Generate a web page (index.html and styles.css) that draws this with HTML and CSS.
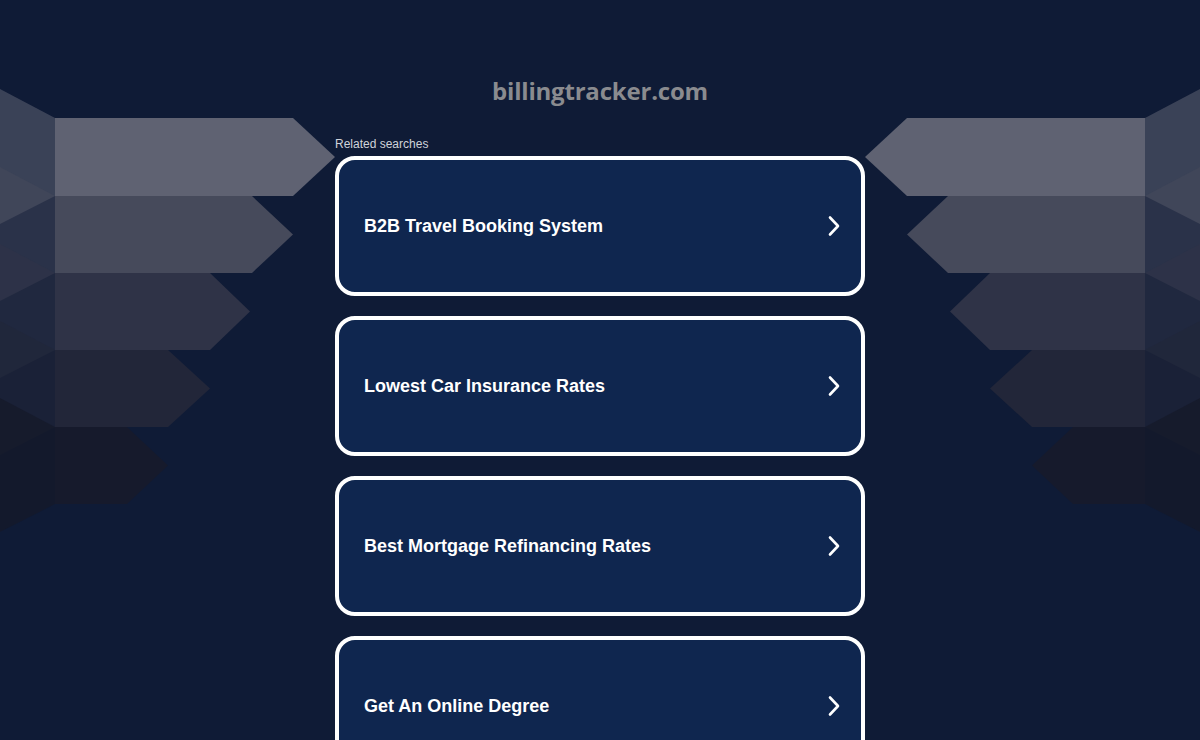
FILE: index.html
```html
<!DOCTYPE html>
<html lang="en">
<head>
<meta charset="utf-8">
<title>billingtracker.com</title>
<link rel="stylesheet" href="styles.css">
</head>
<body>
<svg class="deco deco-left" width="340" height="560" viewBox="0 0 340 560" aria-hidden="true">
  <g class="sides">
    <polygon points="0,89 55,118 55,196 0,224" fill="#5f6272" opacity="0.55"/>
    <polygon points="0,167 55,196 55,273 0,301" fill="#464a5b" opacity="0.5"/>
    <polygon points="0,244 55,273 55,350 0,378" fill="#2f3347" opacity="0.55"/>
    <polygon points="0,321 55,350 55,427 0,455" fill="#222639" opacity="0.6"/>
    <polygon points="0,398 55,427 55,504 0,532" fill="#151929" opacity="0.75"/>
  </g>
  <polygon points="55,118 293,118 335,157 293,196 55,196" fill="#5f6272"/>
  <polygon points="55,196 252,196 293,234.5 252,273 55,273" fill="#464a5b"/>
  <polygon points="55,273 210,273 250,311.5 210,350 55,350" fill="#2f3347"/>
  <polygon points="55,350 168,350 210,388.5 168,427 55,427" fill="#222639"/>
  <polygon points="55,427 127,427 168,465.5 127,504 55,504" fill="#161a2c"/>
</svg>
<svg class="deco deco-right" width="340" height="560" viewBox="0 0 340 560" aria-hidden="true">
  <g transform="translate(340,0) scale(-1,1)">
    <polygon points="0,89 55,118 55,196 0,224" fill="#5f6272" opacity="0.55"/>
    <polygon points="0,167 55,196 55,273 0,301" fill="#464a5b" opacity="0.5"/>
    <polygon points="0,244 55,273 55,350 0,378" fill="#2f3347" opacity="0.55"/>
    <polygon points="0,321 55,350 55,427 0,455" fill="#222639" opacity="0.6"/>
    <polygon points="0,398 55,427 55,504 0,532" fill="#151929" opacity="0.75"/>
    <polygon points="55,118 293,118 335,157 293,196 55,196" fill="#5f6272"/>
    <polygon points="55,196 252,196 293,234.5 252,273 55,273" fill="#464a5b"/>
    <polygon points="55,273 210,273 250,311.5 210,350 55,350" fill="#2f3347"/>
    <polygon points="55,350 168,350 210,388.5 168,427 55,427" fill="#222639"/>
    <polygon points="55,427 127,427 168,465.5 127,504 55,504" fill="#161a2c"/>
  </g>
</svg>

<main class="page">
  <h1 class="domain">billingtracker.com</h1>
  <section class="related">
    <div class="related-title">Related searches</div>
    <ul class="links">
      <li><a class="link-card" href="#"><span class="link-text">B2B Travel Booking System</span>
        <svg class="chev" width="14" height="22" viewBox="0 0 14 22"><path d="M3 2.5 L11 11 L3 19.5" fill="none" stroke="#fff" stroke-width="2.6" stroke-linecap="round" stroke-linejoin="round"/></svg></a></li>
      <li><a class="link-card" href="#"><span class="link-text">Lowest Car Insurance Rates</span>
        <svg class="chev" width="14" height="22" viewBox="0 0 14 22"><path d="M3 2.5 L11 11 L3 19.5" fill="none" stroke="#fff" stroke-width="2.6" stroke-linecap="round" stroke-linejoin="round"/></svg></a></li>
      <li><a class="link-card" href="#"><span class="link-text">Best Mortgage Refinancing Rates</span>
        <svg class="chev" width="14" height="22" viewBox="0 0 14 22"><path d="M3 2.5 L11 11 L3 19.5" fill="none" stroke="#fff" stroke-width="2.6" stroke-linecap="round" stroke-linejoin="round"/></svg></a></li>
      <li><a class="link-card" href="#"><span class="link-text">Get An Online Degree</span>
        <svg class="chev" width="14" height="22" viewBox="0 0 14 22"><path d="M3 2.5 L11 11 L3 19.5" fill="none" stroke="#fff" stroke-width="2.6" stroke-linecap="round" stroke-linejoin="round"/></svg></a></li>
    </ul>
  </section>
</main>
</body>
</html>
```

FILE: styles.css
```css
html, body {
  margin: 0;
  padding: 0;
}
body {
  background: #0f1b36;
  font-family: "Liberation Sans", Arial, sans-serif;
  height: 740px;
  overflow: hidden;
  position: relative;
}
.deco {
  position: absolute;
  top: 0;
}
.deco-left { left: 0; }
.deco-right { right: 0; }

.page {
  position: relative;
  width: 530px;
  margin: 0 auto;
  padding-top: 75px;
}
.domain {
  margin: 0;
  text-align: center;
  font-family: "Open Sans", "DejaVu Sans", sans-serif;
  font-weight: 700;
  font-size: 24px;
  line-height: 32px;
  color: #8a8b8f;
  letter-spacing: -0.2px;
}
.related {
  margin-top: 30px;
}
.related-title {
  font-size: 12px;
  line-height: 14px;
  color: #d0d3da;
  margin-bottom: 5px;
}
.links {
  list-style: none;
  margin: 0;
  padding: 0;
  display: flex;
  flex-direction: column;
  gap: 20px;
}
.link-card {
  display: flex;
  align-items: center;
  justify-content: space-between;
  box-sizing: border-box;
  height: 140px;
  border: 4px solid #ffffff;
  border-radius: 20px;
  background: #0f264f;
  padding: 0 20px 0 25px;
  text-decoration: none;
}
.link-text {
  color: #ffffff;
  font-weight: 700;
  font-size: 18px;
}
.chev {
  display: block;
}
```
